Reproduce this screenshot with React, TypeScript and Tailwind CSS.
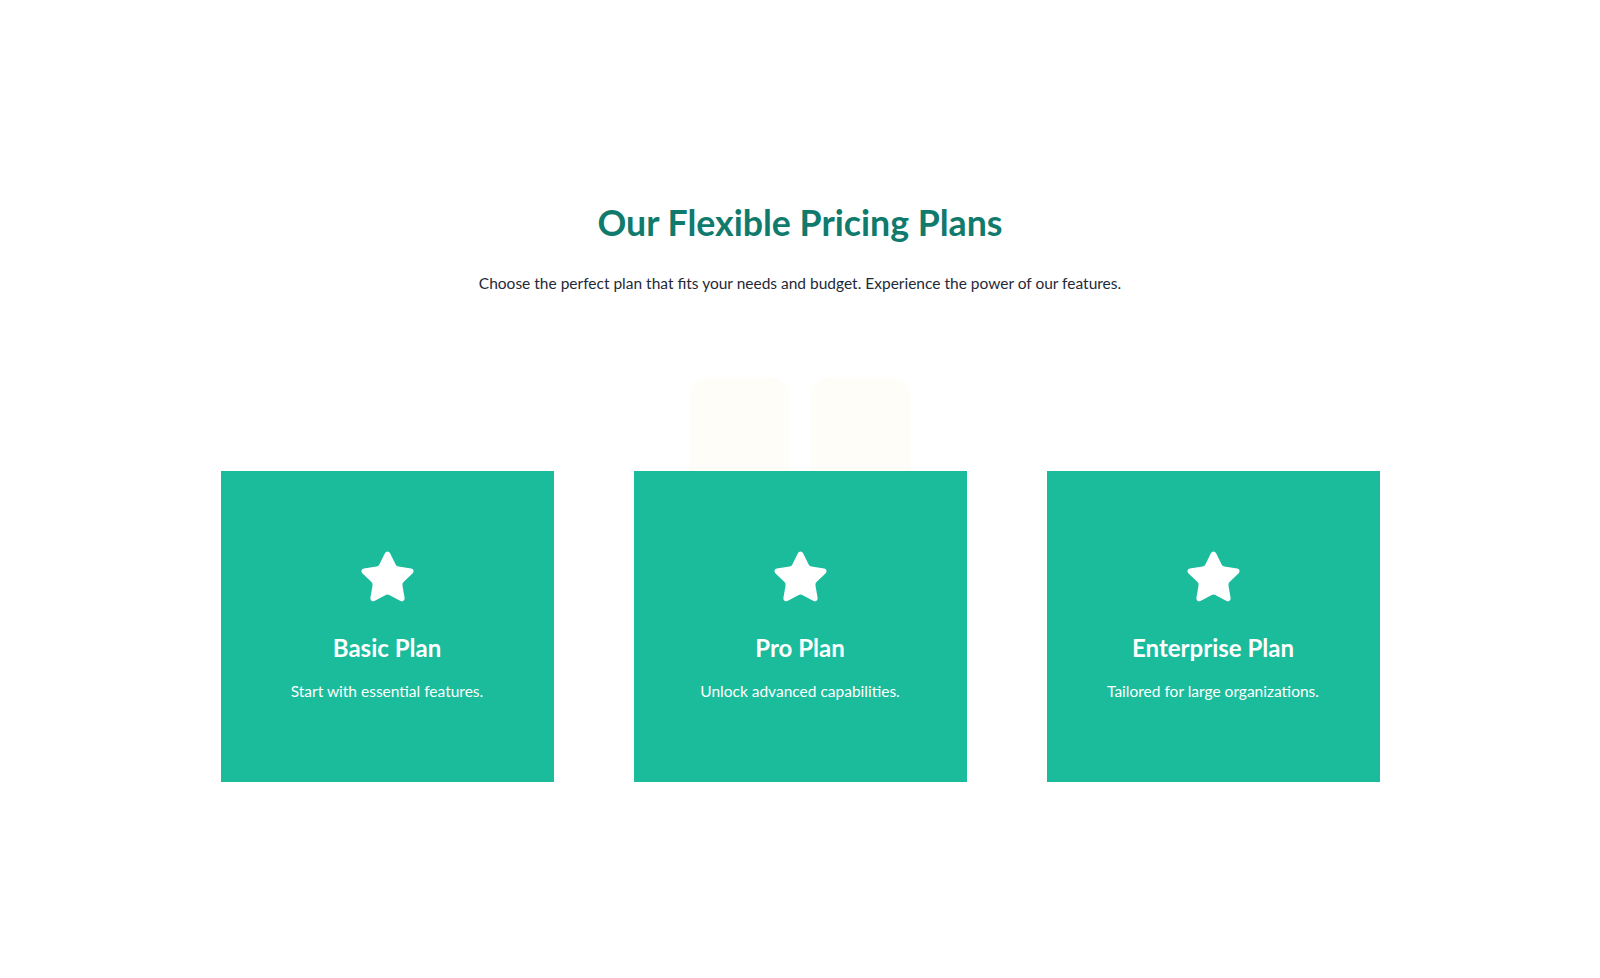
import React from "react";
import { Star } from "lucide-react";

const plans = [
  { title: "Basic Plan", desc: "Start with essential features." },
  { title: "Pro Plan", desc: "Unlock advanced capabilities." },
  { title: "Enterprise Plan", desc: "Tailored for large organizations." },
];

export default function App() {
  return (
    <div
      className="min-h-screen w-full bg-white"
      style={{ fontFamily: "Lato, 'Noto Sans', sans-serif" }}
    >
      <section className="flex flex-col items-center pt-[203px]">
        <h1 className="text-[35.7px] leading-[40px] font-bold text-[#107a6c]">
          Our Flexible Pricing Plans
        </h1>
        <p className="mt-[28px] text-[15.5px] leading-[24px] text-[#1f2937]">
          Choose the perfect plan that fits your needs and budget. Experience the power of our features.
        </p>
        <div className="mt-[82px] flex h-[94px] gap-[22px] overflow-hidden">
          <div className="h-[120px] w-[100px] rounded-[20px] bg-[#fefdf7]" />
          <div className="h-[120px] w-[100px] rounded-[20px] bg-[#fefdf7]" />
        </div>
        <div className="flex gap-[80px]">
          {plans.map((p) => (
            <div
              key={p.title}
              className="flex h-[311px] w-[333px] flex-col items-center justify-center bg-[#1abc9c] pb-[3px] text-white"
            >
              <Star size={59} fill="white" stroke="white" strokeWidth={1.2} strokeLinejoin="round" />
              <h2 className="mt-[25px] text-[24px] leading-[32px] font-bold">{p.title}</h2>
              <p className="mt-[15px] text-[15.5px] leading-[24px]">{p.desc}</p>
            </div>
          ))}
        </div>
      </section>
    </div>
  );
}
